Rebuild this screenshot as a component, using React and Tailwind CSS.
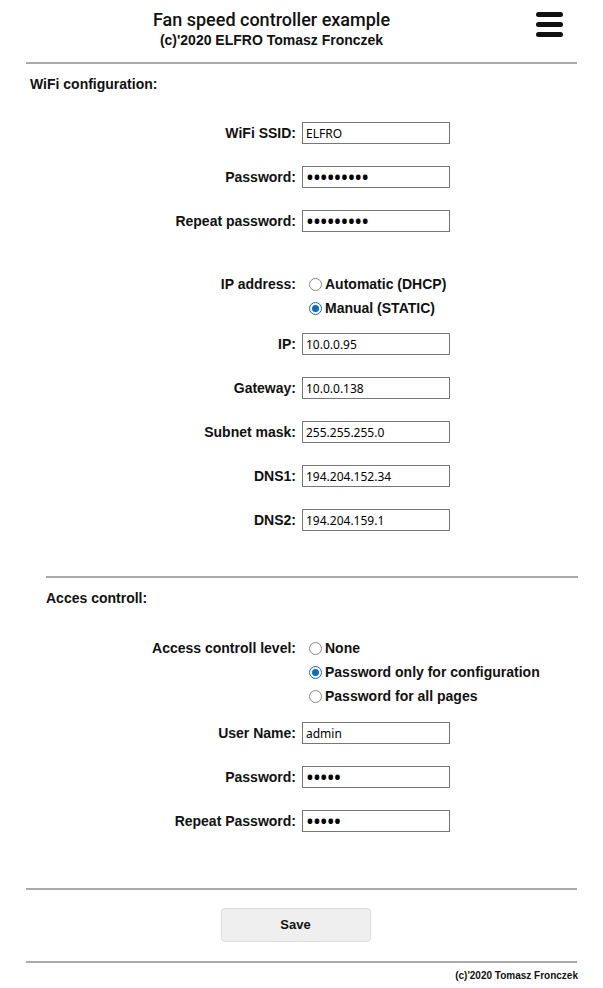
import { useState } from 'react';

const font = { fontFamily: '"Liberation Sans", Arial, sans-serif' };

function Field({ label, value, type = 'text' }) {
  const isPass = type === 'password';
  return (
    <div className="flex items-center h-[44px]">
      <label className="w-[296px] text-right text-[14px] font-bold text-[#111]">{label}</label>
      <input
        type={type}
        defaultValue={value}
        className={`ml-[6px] w-[148px] h-[22px] border border-[#767676] bg-white px-[3px] text-black outline-none ${isPass ? 'text-[21px] leading-none tracking-[-1px]' : 'text-[12px]'}`}
        style={{ fontFamily: '"Noto Sans", "Open Sans", sans-serif' }}
      />
    </div>
  );
}

function Radio({ label, checked, onClick }) {
  return (
    <div className="flex items-center h-[24px] cursor-pointer" onClick={onClick}>
      {checked ? (
        <span className="w-[13px] h-[13px] rounded-full border border-[#0f6cbd] flex items-center justify-center">
          <span className="w-[7px] h-[7px] rounded-full bg-[#0f6cbd]" />
        </span>
      ) : (
        <span className="w-[13px] h-[13px] rounded-full border border-[#858585]" />
      )}
      <span className="ml-[3px] text-[14px] font-bold text-[#111]">{label}</span>
    </div>
  );
}

function RadioGroup({ label, options, value, onChange }) {
  return (
    <div className="flex items-start">
      <div className="w-[296px] text-right text-[14px] font-bold text-[#111] h-[24px] leading-[24px]">{label}</div>
      <div className="ml-[13px] flex flex-col">
        {options.map((o, i) => (
          <Radio key={o} label={o} checked={value === i} onClick={() => onChange(i)} />
        ))}
      </div>
    </div>
  );
}

export default function App() {
  const [ipMode, setIpMode] = useState(1);
  const [access, setAccess] = useState(1);

  return (
    <div className="w-[603px] min-h-[988px] bg-white text-[#111]" style={font}>
      {/* Header */}
      <div className="relative h-[62px] flex flex-col items-center pt-[9px] pr-[60px]">
        <div
          className="text-[18px] font-medium leading-[22px] text-[#111]"
          style={{ fontFamily: 'Roboto, "Liberation Sans", sans-serif' }}
        >
          Fan speed controller example
        </div>
        <div className="text-[14px] font-bold leading-[18px]">(c)'2020 ELFRO Tomasz Fronczek</div>
        <div className="absolute left-[536px] top-[12px] flex flex-col gap-[5px]">
          <span className="block w-[27px] h-[5px] rounded-full bg-[#111]" />
          <span className="block w-[27px] h-[5px] rounded-full bg-[#111]" />
          <span className="block w-[27px] h-[5px] rounded-full bg-[#111]" />
        </div>
      </div>
      <div className="mx-[26px] h-[2px] bg-[#aaa]" />

      {/* WiFi */}
      <div className="pl-[30px] pt-[10px] pb-[16px] text-[14px] font-bold">WiFi configuration:</div>
      <Field label="WiFi SSID:" value="ELFRO" />
      <Field label="Password:" value="123456789" type="password" />
      <Field label="Repeat password:" value="123456789" type="password" />
      <div className="h-[29px]" />
      <RadioGroup
        label="IP address:"
        options={['Automatic (DHCP)', 'Manual (STATIC)']}
        value={ipMode}
        onChange={setIpMode}
      />
      <div className="h-[2px]" />
      <Field label="IP:" value="10.0.0.95" />
      <Field label="Gateway:" value="10.0.0.138" />
      <Field label="Subnet mask:" value="255.255.255.0" />
      <Field label="DNS1:" value="194.204.152.34" />
      <Field label="DNS2:" value="194.204.159.1" />

      {/* Access */}
      <div className="ml-[46px] mr-[25px] mt-[34px] h-[2px] bg-[#aaa]" />
      <div className="pl-[46px] pt-[10px] text-[14px] font-bold">Acces controll:</div>
      <div className="h-[27px]" />
      <RadioGroup
        label="Access controll level:"
        options={['None', 'Password only for configuration', 'Password for all pages']}
        value={access}
        onChange={setAccess}
      />
      <div className="h-[3px]" />
      <Field label="User Name:" value="admin" />
      <Field label="Password:" value="12345" type="password" />
      <Field label="Repeat Password:" value="12345" type="password" />

      {/* Footer */}
      <div className="mx-[26px] mt-[45px] h-[2px] bg-[#aaa]" />
      <div className="flex justify-center pt-[18px] pb-[19px] pr-[12px]">
        <button className="w-[150px] h-[34px] rounded-[4px] border border-[#ddd] bg-[#efefef] text-[13px] font-bold text-[#111]">
          Save
        </button>
      </div>
      <div className="mx-[26px] h-[2px] bg-[#aaa]" />
      <div className="mx-[25px] pt-[5px] text-right text-[10px] font-bold">(c)'2020 Tomasz Fronczek</div>
    </div>
  );
}
